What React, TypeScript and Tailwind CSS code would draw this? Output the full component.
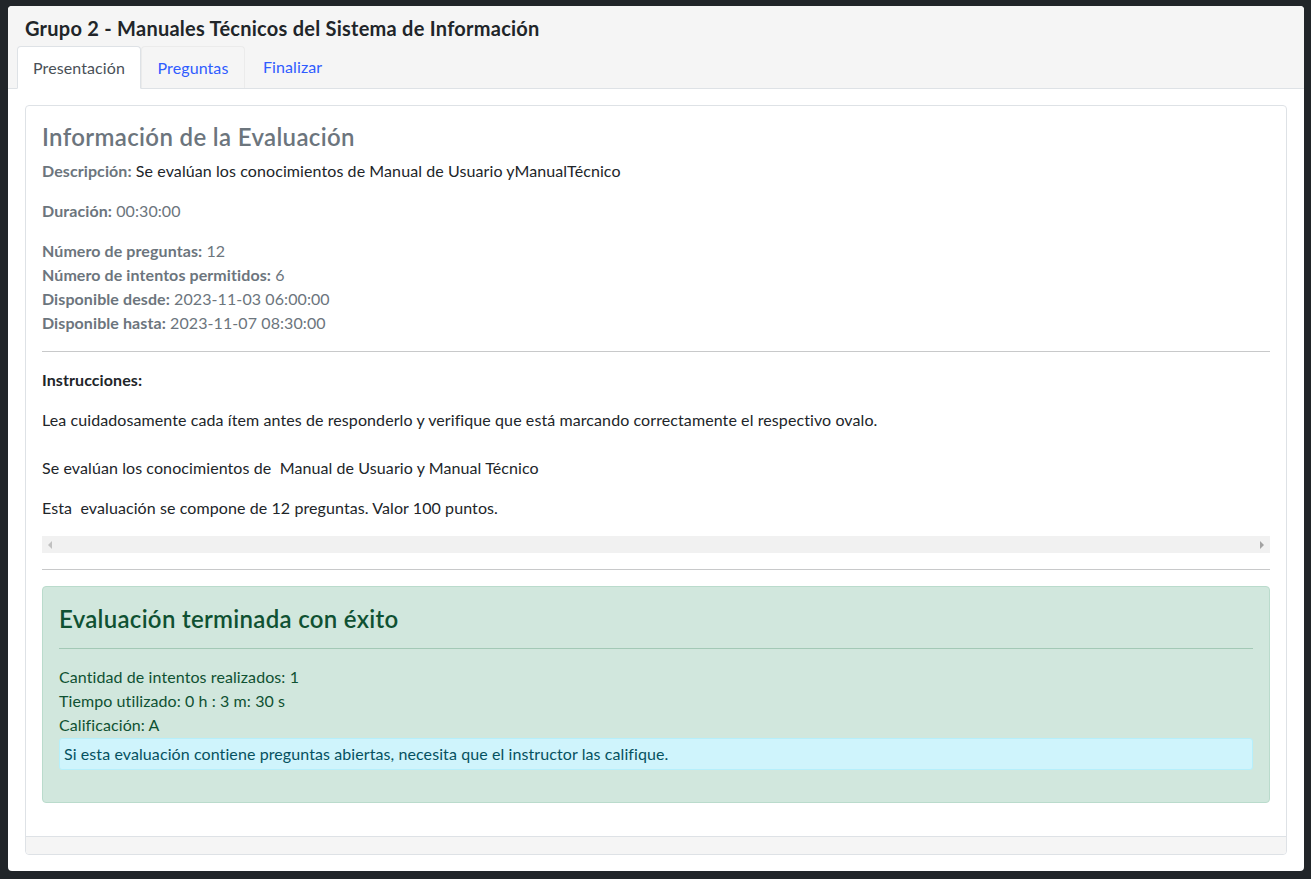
import React from "react";

const font = { fontFamily: "Lato, 'Noto Sans', sans-serif" };

export default function App() {
  return (
    <div
      className="w-[1311px] h-[879px] bg-[#212529] pt-[6px] pl-[8px] pr-[7px] pb-[8px] text-[#212529] tracking-[0.09px]"
      style={font}
    >
      <div className="h-full bg-white rounded-[4px] flex flex-col overflow-hidden">
        {/* header */}
        <div className="bg-[#f5f5f5] border-b border-[#dee2e6] pt-[10px] px-[9px]">
          <h1 className="pl-[8px] text-[20px] leading-[24px] font-bold text-[#212529] tracking-[0.25px]">
            Grupo 2 - Manuales Técnicos del Sistema de Información
          </h1>
          <div className="flex mt-[6px] -mb-px text-[16px] leading-[24px]">
            <div className="w-[124px] h-[43px] flex items-center justify-center bg-white border border-[#dee2e6] border-b-white rounded-t-[4px] text-[#495057]">
              Presentación
            </div>
            <div className="w-[104px] h-[42px] flex items-center justify-center border border-[#ebebeb] border-b-0 rounded-t-[4px] text-[#2f5cff]">
              Preguntas
            </div>
            <div className="px-[18px] h-[42px] flex items-center justify-center text-[#2f5cff]">
              Finalizar
            </div>
          </div>
        </div>
        {/* body */}
        <div className="flex-1 py-[16px] px-[17px] flex flex-col">
          <div className="flex-1 border border-[#dee2e6] rounded-[4px] flex flex-col">
            <div className="flex-1 p-[16px] text-[16px] leading-[24px]">
              <h4 className="text-[24px] leading-[29px] font-semibold text-[#6c757d] mb-[8px] tracking-[0.35px]">
                Información de la Evaluación
              </h4>
              <p className="mb-[16px]">
                <b className="text-[#6c757d]">Descripción:</b> Se evalúan los conocimientos de Manual de Usuario yManualTécnico
              </p>
              <p className="mb-[16px] text-[#6c757d]">
                <b>Duración:</b> 00:30:00
              </p>
              <div className="text-[#6c757d]">
                <div>
                  <b>Número de preguntas:</b> 12
                </div>
                <div>
                  <b>Número de intentos permitidos:</b> 6
                </div>
                <div>
                  <b>Disponible desde:</b> 2023-11-03 06:00:00
                </div>
                <div>
                  <b>Disponible hasta:</b> 2023-11-07 08:30:00
                </div>
              </div>
              <hr className="my-[16px] border-0 border-t border-[#c8c9ca]" />
              <p className="font-bold mb-[16px]">Instrucciones:</p>
              <p className="mb-[24px]">
                Lea cuidadosamente cada ítem antes de responderlo y verifique que está marcando correctamente el respectivo ovalo.
              </p>
              <p className="mb-[16px]">Se evalúan los conocimientos de&nbsp; Manual de Usuario y Manual Técnico</p>
              <p className="mb-[16px]">Esta&nbsp; evaluación se compone de 12 preguntas. Valor 100 puntos.</p>
              {/* scrollbar */}
              <div className="h-[17px] bg-[#f1f1f1] flex items-center justify-between px-[5px]">
                <svg width="6" height="8" viewBox="0 0 6 8">
                  <path d="M5 0 L1 4 L5 8 Z" fill="#c1c1c1" />
                </svg>
                <svg width="6" height="8" viewBox="0 0 6 8">
                  <path d="M1 0 L5 4 L1 8 Z" fill="#a3a3a3" />
                </svg>
              </div>
              <hr className="my-[16px] border-0 border-t border-[#c8c9ca]" />
              {/* alert */}
              <div className="bg-[#d1e7dd] border border-[#badbcc] rounded-[4px] p-[16px] text-[#0f5132] mb-[16px]">
                <h4 className="text-[24px] leading-[29px] font-semibold tracking-[0.3px] pt-[1px]">
                  Evaluación terminada con éxito
                </h4>
                <hr className="mt-[15px] mb-[16px] border-0 border-t border-[#a3c9b6]" />
                <div>Cantidad de intentos realizados: 1</div>
                <div>Tiempo utilizado: 0 h : 3 m: 30 s</div>
                <div>Calificación: A</div>
                <div className="mt-[1px] mb-[16px] bg-[#cff4fc] border border-[#b6effb] rounded-[3px] px-[4px] py-[3px] text-[#055160]">
                  Si esta evaluación contiene preguntas abiertas, necesita que el instructor las califique.
                </div>
              </div>
            </div>
            <div className="h-[18px] bg-[#f5f5f5] border-t border-[#dee2e6] rounded-b-[4px]" />
          </div>
        </div>
      </div>
    </div>
  );
}
